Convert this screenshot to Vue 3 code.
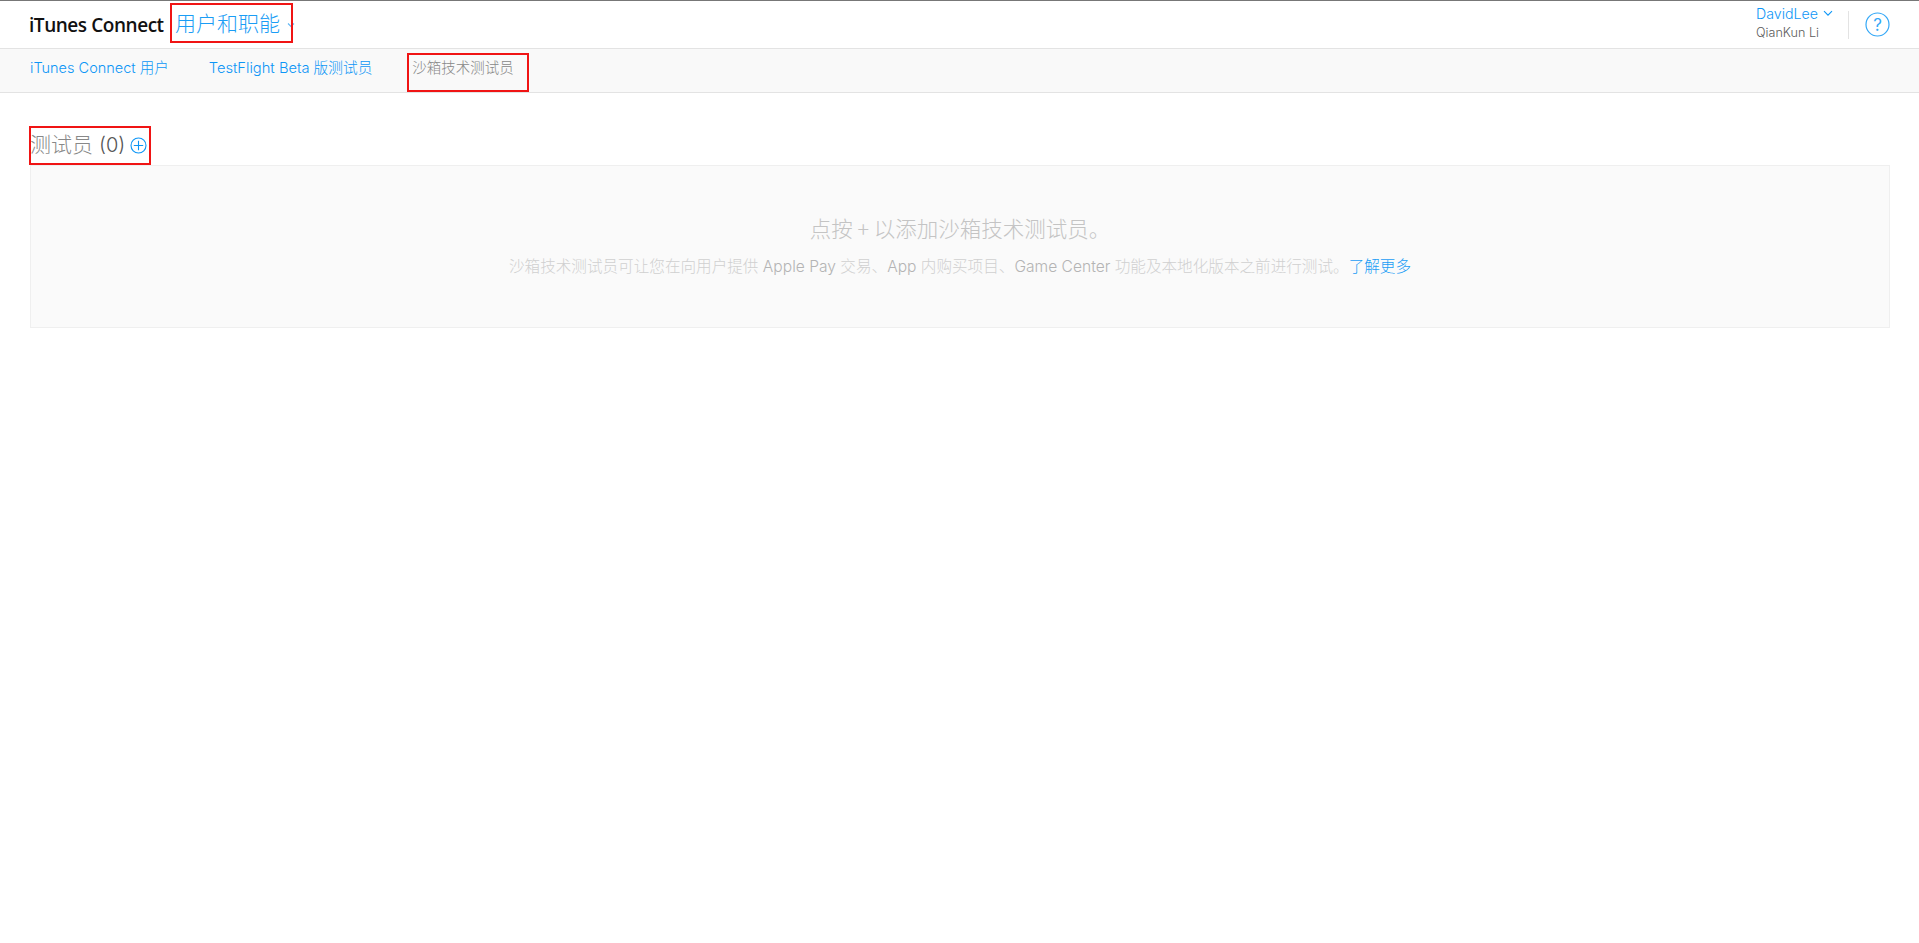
<template>
  <div class="page">
    <header class="topbar">
      <div class="brand-group">
        <span class="brand">iTunes Connect</span>
        <span class="module">用户和职能<span class="red-box box-module"></span></span>
        <svg class="module-chev" width="8" height="6" viewBox="0 0 8 6"><path d="M1 1.5 L4 4.5 L7 1.5" fill="none" stroke="#5fb6f3" stroke-width="1.1"/></svg>
      </div>
      <div class="user-group">
        <div class="user">
          <div class="user-name">DavidLee
            <svg width="10" height="7" viewBox="0 0 10 7"><path d="M1 1.2 L5 5.2 L9 1.2" fill="none" stroke="#0d96f6" stroke-width="1.1"/></svg>
          </div>
          <div class="user-sub">QianKun Li</div>
        </div>
        <div class="divider"></div>
        <svg class="help" width="25" height="25" viewBox="0 0 25 25">
          <circle cx="12.5" cy="12.5" r="11.5" fill="none" stroke="#34a8f7" stroke-width="1.2"/>
          <text x="12.5" y="18.5" text-anchor="middle" class="help-q">?</text>
        </svg>
      </div>
    </header>
    <nav class="subnav">
      <a class="tab link">iTunes Connect 用户</a>
      <a class="tab link spaced wide">TestFlight Beta 版测试员</a>
      <span class="tab current spaced">沙箱技术测试员<span class="red-box box-tab"></span></span>
    </nav>
    <main class="content">
      <h2 class="title">
        <span class="title-cn">测试员</span>
        <span class="count">(0)</span>
        <svg class="add" width="17" height="17" viewBox="0 0 17 17">
          <circle cx="8.5" cy="8.5" r="7.5" fill="none" stroke="#0d96f6" stroke-width="1.1"/>
          <path d="M8.5 3.8 V13.2 M3.8 8.5 H13.2" stroke="#0d96f6" stroke-width="1.1"/>
        </svg>
        <span class="red-box box-title"></span>
      </h2>
      <section class="empty">
        <p class="empty-title">点按 + 以添加沙箱技术测试员。</p>
        <p class="empty-text"><span class="cn">沙箱技术测试员可让您在向用户提供</span> Apple Pay <span class="cn">交易、</span>App <span class="cn">内购买项目、</span>Game Center <span class="cn">功能及本地化版本之前进行测试。</span><a class="more">了解更多</a></p>
      </section>
    </main>
  </div>
</template>

<script setup>
</script>

<style>
html, body { margin: 0; background: #fff; }
</style>

<style scoped>
.page {
  min-height: 943px;
  background: #fff;
  font-family: "Inter", "Noto Sans CJK SC", sans-serif;
  font-weight: 300;
  color: #666;
}
.topbar {
  box-sizing: border-box;
  height: 49px;
  border-top: 1px solid #777;
  border-bottom: 1px solid #e3e3e3;
  padding: 0 29px 0 29px;
  display: flex;
  justify-content: space-between;
  align-items: center;
}
.brand-group { display: flex; align-items: center; }
.brand {
  font-family: "Open Sans", sans-serif;
  font-size: 19px;
  font-weight: 600;
  letter-spacing: -0.45px;
  color: #111;
  width: 146px;
  white-space: nowrap;
}
.module {
  position: relative;
  font-family: "Noto Sans CJK SC", sans-serif;
  font-size: 21px;
  line-height: 30px;
  font-weight: 300;
  color: #1a9df5;
  margin-bottom: 5px;
}
.module-chev { margin-left: 7px; margin-top: 0; }
.red-box {
  position: absolute;
  border: 2px solid #f01414;
  box-sizing: border-box;
  pointer-events: none;
  height: 39px;
}
.box-module { left: -5px; top: -4px; width: 123px; height: 40px; }
.box-tab { left: -5px; top: 4px; width: 122px; }
.box-title { left: -1px; top: 1px; width: 122px; }
.user-group { display: flex; align-items: center; }
.user { width: 92px; }
.user-name {
  font-size: 14.2px;
  line-height: 16px;
  color: #0d96f6;
  display: flex;
  align-items: center;
  gap: 5px;
  margin-top: -3px;
}
.user-sub {
  font-size: 12.6px;
  line-height: 16px;
  color: #5c5c5c;
  margin-top: 3px;
}
.divider {
  width: 1px;
  height: 28px;
  background: #e3e3e3;
  margin-right: 16px;
}
.help-q {
  font-family: "Inter", sans-serif;
  font-size: 17px;
  fill: #34a8f7;
  font-weight: 400;
}
.subnav {
  box-sizing: border-box;
  height: 44px;
  background: #f9f9f9;
  border-bottom: 1px solid #e3e3e3;
  padding: 0 0 0 30px;
  display: flex;
  align-items: stretch;
  font-size: 14.5px;
  line-height: 20px;
}
.tab { padding-top: 9px; white-space: nowrap; }
.link { color: #0d96f6; }
.wide { font-size: 14.7px; }
.spaced { margin-left: 40px; }
.current {
  position: relative;
  color: #888;
}
.content { padding: 32px 29px 0 30px; }
.title {
  position: relative;
  margin: 0;
  height: 40px;
  display: flex;
  align-items: center;
  font-size: 20px;
  font-weight: 300;
  color: #666;
  gap: 6px;
}
.title-cn {
  font-family: "Noto Sans CJK SC", sans-serif;
  font-size: 21px;
  font-weight: 300;
  color: #888;
  margin-bottom: 4px;
}
.count { color: #555; }
.add { margin-left: -1px; }
.empty {
  box-sizing: border-box;
  height: 163px;
  background: #fafafa;
  border: 1px solid #efefef;
  text-align: center;
}
.empty-title {
  margin: 48px 0 0;
  font-size: 21.5px;
  line-height: 28px;
  color: #c4c4c4;
  font-family: "Noto Sans CJK SC", sans-serif;
  font-weight: 300;
}
.empty-text {
  margin: 12px 0 0;
  font-size: 15.6px;
  line-height: 22px;
  color: #b4b4b4;
}
.cn { font-family: "Noto Sans CJK SC", sans-serif; color: #d0d0d0; font-weight: 300; }
.more { color: #1a9df5; font-family: "Noto Sans CJK SC", sans-serif; }
</style>
